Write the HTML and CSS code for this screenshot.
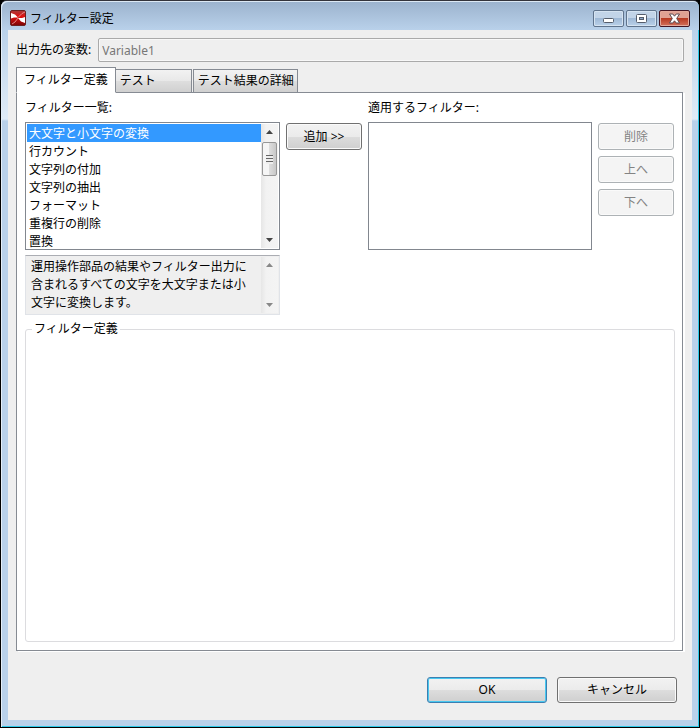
FILE: index.html
```html
<!DOCTYPE html>
<html lang="ja">
<head>
    <meta charset="UTF-8">
    <meta name="viewport" content="width=device-width, initial-scale=1.0">
    <title>フィルター設定</title>
    <link rel="stylesheet" href="styles.css">
</head>
<body>
    <div class="window">
        <header class="titlebar">
            <svg class="app-icon" width="16" height="16" viewBox="0 0 16 16" aria-hidden="true">
                <defs>
                    <linearGradient id="red" x1="0" y1="0" x2="0" y2="1">
                        <stop offset="0" stop-color="#a83a3a"/>
                        <stop offset="0.4" stop-color="#e01010"/>
                        <stop offset="1" stop-color="#7c0404"/>
                    </linearGradient>
                </defs>
                <rect x="0.5" y="0.5" width="15" height="15" rx="1.5" fill="url(#red)" stroke="#6b2020"/>
                <path d="M1 3 L5 4.5 L8 7.5 L4 7.5 L1 8.5Z" fill="#fff"/>
                <path d="M15 13 L11 11.5 L8 8 L12 8 L15 7Z" fill="#fff"/>
                <path d="M8 7.500 L12 3.500 L15 2" fill="none" stroke="#f0a0a0" stroke-width="0.8"/>
                <path d="M8 8 L5 12 L2 14" fill="none" stroke="#f0a0a0" stroke-width="0.8"/>
            </svg>
            <h1>フィルター設定</h1>
            <div class="caption-buttons">
                <button type="button" class="caption" aria-label="最小化">
                    <svg width="13" height="11" viewBox="0 0 13 11"><rect x="1.5" y="5.5" width="10" height="4" rx="1" fill="#fff" stroke="#555d6b"/></svg>
                </button>
                <button type="button" class="caption" aria-label="最大化">
                    <svg width="13" height="11" viewBox="0 0 13 11"><rect x="1.5" y="1.5" width="10" height="8" rx="1" fill="#fff" stroke="#555d6b"/><rect x="4.5" y="4.5" width="4" height="2" fill="#8ea8c8" stroke="#555d6b"/></svg>
                </button>
                <button type="button" class="caption close" aria-label="閉じる">
                    <svg width="13" height="11" viewBox="0 0 13 11"><path d="M1.500 1 H4.800 L6.500 3.200 L8.200 1 H11.500 L8.700 5.500 L11.500 10 H8.200 L6.500 7.800 L4.800 10 H1.500 L4.300 5.500Z" fill="#fff" stroke="#5d4a50"/></svg>
                </button>
            </div>
        </header>

        <main class="client">
            <div class="output-row">
                <label for="variable">出力先の変数:</label>
                <input id="variable" type="text" value="Variable1" disabled>
            </div>

            <div class="tabs" role="tablist">
                <button type="button" class="tab active" role="tab" aria-selected="true">フィルター定義</button>
                <button type="button" class="tab" role="tab">テスト</button>
                <button type="button" class="tab" role="tab">テスト結果の詳細</button>
            </div>

            <section class="panel">
                <div class="filters">
                    <div class="available">
                        <label for="filter-list">フィルター一覧:</label>
                        <div class="listbox">
                            <select id="filter-list" size="7">
                                <option selected>大文字と小文字の変換</option>
                                <option>行カウント</option>
                                <option>文字列の付加</option>
                                <option>文字列の抽出</option>
                                <option>フォーマット</option>
                                <option>重複行の削除</option>
                                <option>置換</option>
                            </select>
                            <div class="scrollbar" aria-hidden="true">
                                <svg class="arrow" width="7" height="4" viewBox="0 0 7 4"><path d="M0 4 L3.500 0 L7 4Z"/></svg>
                                <div class="thumb"></div>
                                <svg class="arrow down" width="7" height="4" viewBox="0 0 7 4"><path d="M0 0 L3.500 4 L7 0Z"/></svg>
                            </div>
                        </div>
                        <div class="description">
                            <textarea rows="3" readonly aria-label="説明">運用操作部品の結果やフィルター出力に含まれるすべての文字を大文字または小文字に変換します。</textarea>
                            <div class="scrollbar" aria-hidden="true">
                                <svg class="arrow" width="7" height="4" viewBox="0 0 7 4"><path d="M0 4 L3.500 0 L7 4Z"/></svg>
                                <svg class="arrow down" width="7" height="4" viewBox="0 0 7 4"><path d="M0 0 L3.500 4 L7 0Z"/></svg>
                            </div>
                        </div>
                    </div>

                    <button type="button" class="btn small">追加 &gt;&gt;</button>

                    <div class="applied">
                        <label for="applied-list">適用するフィルター:</label>
                        <div class="listbox">
                            <select id="applied-list" size="7"></select>
                        </div>
                    </div>

                    <div class="actions">
                        <button type="button" class="btn small" disabled>削除</button>
                        <button type="button" class="btn small" disabled>上へ</button>
                        <button type="button" class="btn small" disabled>下へ</button>
                    </div>
                </div>

                <fieldset class="definition">
                    <legend>フィルター定義</legend>
                </fieldset>
            </section>

            <footer class="buttons">
                <button type="button" class="btn default">OK</button>
                <button type="button" class="btn">キャンセル</button>
            </footer>
        </main>
    </div>
</body>
</html>
```
FILE: styles.css
```css
* {
    box-sizing: border-box;
}

body {
    margin: 0;
    background: #000;
    color: #000;
}

body, button, input, select, textarea {
    font-family: "Noto Sans", "Noto Sans CJK JP", sans-serif;
    font-size: 12px;
    line-height: 18px;
}

/* Window frame */
.window {
    display: flex;
    flex-direction: column;
    min-height: 100vh;
    padding: 0 7px 7px;
    border: 1px solid #000;
    border-top-color: #33333b;
    border-radius: 7px 7px 0 0;
    background: linear-gradient(#9db4d0 0, #b9d1ea 28px, #d5e4f3 90px, #dfebf7 118px, #b9d1ea 120px);
    box-shadow: inset 1px 1px 0 #e4eef8, inset -1px -1px 0 #2cc9e8;
}

.titlebar {
    display: flex;
    align-items: center;
    gap: 4px;
    height: 29px;
    margin: 0 -7px;
    padding: 0 9px;
    border-radius: 6px 6px 0 0;
    background: linear-gradient(#9bb2cd, #b9d1ea);
    box-shadow: inset 1px 1px 0 #dce8f4;
}

.app-icon {
    margin-top: 5px;
}

.titlebar h1 {
    flex: 1;
    margin: 6px 0 0;
    font-size: 12px;
    font-weight: normal;
}

.caption-buttons {
    display: flex;
    gap: 2px;
    margin-top: 6px;
}

.caption {
    display: flex;
    align-items: center;
    justify-content: center;
    width: 31px;
    height: 17px;
    padding: 0;
    border: 1px solid #5f738c;
    border-radius: 2px;
    background: linear-gradient(#c2d4e8 50%, #9fb9d6 50%, #bad1e9);
    box-shadow: inset 0 0 0 1px #d5e3f1;
}

.caption.close {
    border-color: #431422;
    background: linear-gradient(#e0a193 50%, #b83a22 50%, #d3715c);
    box-shadow: inset 0 0 0 1px #e3a99b;
}

.client {
    display: flex;
    flex: 1;
    flex-direction: column;
    padding: 8px 9px 17px 8px;
    background: #efefef;
}

.output-row {
    display: flex;
    align-items: center;
    gap: 7px;
    margin-right: -1px;
}

.output-row input {
    flex: 1;
    min-width: 0;
    height: 24px;
    padding: 0 3px;
    border: 1px solid #aaa;
    border-radius: 2px;
    background: #efefef;
    box-shadow: inset 0 0 0 1px #f8f8f8;
    color: #777;
}

/* Tabs */
.tabs {
    display: flex;
    align-items: flex-end;
    height: 26px;
    margin-top: 5px;
}

.tab {
    height: 24px;
    min-width: 76px;
    padding: 0 3px 0 4px;
    border: 1px solid #868b93;
    border-left-width: 0;
    background: linear-gradient(#f2f2f2, #e8e8e8 50%, #dedede 50%, #d0d0d0);
    text-align: left;
    white-space: nowrap;
}

.tab + .tab + .tab {
    margin-left: 1px;
    border-left-width: 1px;
}

.tab.active {
    z-index: 1;
    height: 26px;
    padding: 0 7px;
    border-left-width: 1px;
    border-bottom-color: #fff;
    background: #fff;
}

.panel {
    display: flex;
    flex: 1;
    flex-direction: column;
    margin-top: -1px;
    padding: 6px 7px 8px 8px;
    border: 1px solid #868b93;
    background: #fff;
    box-shadow: 2px 1px 0 #fff;
}

/* Filter lists */
.filters {
    display: flex;
    align-items: flex-start;
    gap: 6px;
    padding-right: 1px;
}

.filters label {
    display: block;
    margin-bottom: 5px;
}

.available {
    flex: 255;
    min-width: 0;
}

.applied {
    flex: 224;
    min-width: 0;
}

.filters > .btn,
.actions {
    margin-top: 24px;
}

.actions {
    display: flex;
    flex-direction: column;
    gap: 6px;
}

.listbox {
    display: flex;
    height: 128px;
    padding: 1px;
    border: 1px solid #82878f;
    background: #fff;
}

select {
    flex: 1;
    min-width: 0;
    height: 100%;
    padding: 0;
    border: 0;
    border-radius: 0;
    overflow: hidden;
    background: #fff;
    outline: 0;
}

option {
    height: 18px;
    min-height: 18px;
    padding: 0 2px;
    line-height: 18px;
}

option:checked {
    background-image: linear-gradient(#39f, #39f);
    -webkit-text-fill-color: #fff;
}

.scrollbar {
    display: flex;
    flex-direction: column;
    align-items: center;
    width: 17px;
    padding: 6px 0;
    background: linear-gradient(90deg, #e6e6e6, #f2f2f2 30%, #f4f4f4);
}

.arrow {
    fill: #444;
}

.arrow.down {
    margin-top: auto;
}

.thumb {
    width: 15px;
    height: 34px;
    margin-top: 8px;
    border: 1px solid #979797;
    border-radius: 2px;
    background:
        repeating-linear-gradient(#666 0 1px, #eee 1px 3px) center / 7px 9px no-repeat,
        linear-gradient(90deg, #f5f5f5 50%, #ddd 50%, #c8c8c8);
}

.description {
    display: flex;
    height: 60px;
    margin-top: 5px;
    padding: 1px;
    border: 1px solid #e0e3e8;
    border-top-color: #abadb3;
    background: #efefef;
}

.description .arrow {
    fill: #888;
}

textarea {
    flex: 1;
    min-width: 0;
    height: 56px;
    padding: 1px 12px 1px 4px;
    border: 0;
    overflow: hidden;
    resize: none;
    background: #efefef;
    outline: 0;
}

/* Filter definition group */
.definition {
    flex: 1;
    min-width: 0;
    min-height: 120px;
    margin: 5px 0 0;
    padding: 0 6px;
    border: 1px solid #dcdcdf;
    border-radius: 3px;
}

.definition legend {
    padding: 0 2px;
}

/* Push buttons */
.btn {
    width: 120px;
    height: 26px;
    padding: 0;
    border: 1px solid #707070;
    border-radius: 3px;
    background: linear-gradient(#f2f2f2, #ebebeb 50%, #ddd 50%, #cfcfcf);
    box-shadow: inset 0 0 0 1px #fafafa;
}

.btn.small {
    width: 76px;
    height: 27px;
}

.btn.default {
    border-color: #3c7fb1;
    box-shadow: inset 0 0 0 1px #48c8f0;
}

.btn:disabled {
    border-color: #adb2b5;
    background: #f4f4f4;
    color: #838383;
}

.buttons {
    display: flex;
    justify-content: flex-end;
    gap: 10px;
    margin-top: 26px;
    padding-right: 6px;
}
```
